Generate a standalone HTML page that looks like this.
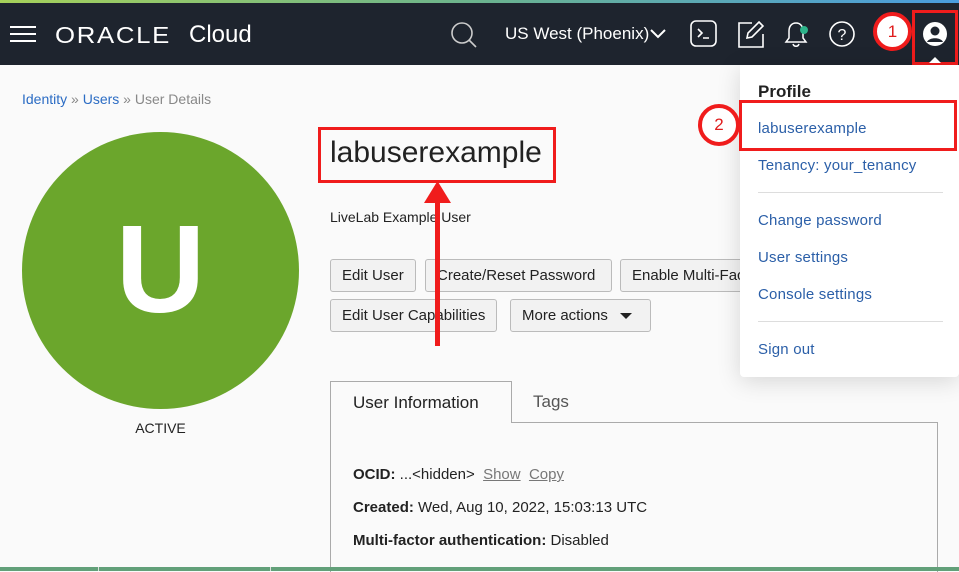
<!DOCTYPE html>
<html><head><meta charset="utf-8"><style>
*{margin:0;padding:0;box-sizing:border-box}
body{width:959px;height:571px;overflow:hidden;background:#fafafa;font-family:"Liberation Sans",sans-serif;position:relative;color:#222}
.a{position:absolute}
.btn{position:absolute;height:33px;border:1px solid #bbb;border-radius:3px;background:#f2f2f2;font-size:15px;line-height:31px;padding:0 11px;color:#222;white-space:nowrap}
.menu a{position:absolute;left:18px;color:#2b5fa8;font-size:15px;text-decoration:none;letter-spacing:.2px}
.red{border:3px solid #f01c1c}
.lbl{position:absolute;font-size:15px;color:#222}
</style></head><body>
<div class="a" style="left:0;top:0;width:959px;height:3px;background:linear-gradient(90deg,#a6d15a,#6bb38e 50%,#4a9de0)"></div>
<div class="a" style="left:0;top:3px;width:959px;height:62px;background:#1e242e"></div>
<div class="a" style="left:10px;top:26px;width:26px;height:2px;background:#fff"></div>
<div class="a" style="left:10px;top:33px;width:26px;height:2px;background:#fff"></div>
<div class="a" style="left:10px;top:40px;width:26px;height:2px;background:#fff"></div>
<div class="a" style="left:55px;top:22px;color:#fff;font-size:23px;letter-spacing:1.5px;transform:scaleX(1.12);transform-origin:left">ORACLE</div>
<div class="a" style="left:189px;top:21px;color:#fff;font-size:24px">Cloud</div>
<svg class="a" style="left:450px;top:21px" width="28" height="28"><circle cx="12" cy="12" r="10" fill="none" stroke="#ccc" stroke-width="1.6"/><line x1="19" y1="19" x2="26" y2="26" stroke="#ccc" stroke-width="1.6"/></svg>
<div class="a" style="left:505px;top:24px;color:#fff;font-size:17px">US West (Phoenix)</div>
<svg class="a" style="left:650px;top:28px" width="16" height="12"><path d="M1 2l7 7 7-7" fill="none" stroke="#fff" stroke-width="2"/></svg>
<svg class="a" style="left:690px;top:20px" width="28" height="28"><rect x="1" y="1" width="25" height="25" rx="5" fill="none" stroke="#fff" stroke-width="1.6"/><path d="M8 9l4 4-4 4M13 18h6" fill="none" stroke="#fff" stroke-width="1.6"/></svg>
<svg class="a" style="left:737px;top:20px" width="28" height="28"><path d="M15 3H2v24h24V14" fill="none" stroke="#fff" stroke-width="1.6"/><path d="M22 2l4 4-11 11-5 1 1-5z" fill="none" stroke="#fff" stroke-width="1.6"/></svg>
<svg class="a" style="left:783px;top:20px" width="28" height="30"><path d="M13 3c-5 0-7 4-7 8v7l-3 4h20l-3-4v-7c0-4-2-8-7-8zM10 24c1 3 5 3 6 0" fill="none" stroke="#fff" stroke-width="1.5"/><circle cx="21" cy="10" r="4" fill="#2db38a"/></svg>
<svg class="a" style="left:828px;top:20px" width="28" height="28"><circle cx="14" cy="14" r="12" fill="none" stroke="#fff" stroke-width="1.6"/><text x="14" y="20" font-size="16" fill="#fff" text-anchor="middle" font-family="Liberation Sans">?</text></svg>
<div class="a" style="left:873px;top:12px;width:39px;height:39px;border-radius:50%;background:#fff;border:4px solid #f01c1c;color:#e01c1c;font-size:17px;text-align:center;line-height:31px">1</div>
<div class="a red" style="left:912px;top:10px;width:46px;height:55px"></div>
<svg class="a" style="left:922px;top:21px" width="26" height="26"><circle cx="13" cy="13" r="12" fill="#fff"/><circle cx="13" cy="10" r="4.5" fill="#1e242e"/><path d="M5 21c2-5 14-5 16 0" fill="#1e242e"/></svg>
<div class="a" style="left:22px;top:91px;font-size:14px;color:#888"><span style="color:#2b6cc4">Identity</span> » <span style="color:#2b6cc4">Users</span> » User Details</div>
<div class="a" style="left:22px;top:132px;width:277px;height:277px;border-radius:50%;background:#6ba62c"></div>
<div class="a" style="left:22px;top:200px;width:277px;text-align:center;color:#fff;font-size:124px;font-weight:bold;line-height:140px">U</div>
<div class="a" style="left:22px;top:420px;width:277px;text-align:center;font-size:14px">ACTIVE</div>
<div class="a red" style="left:318px;top:127px;width:238px;height:56px"></div>
<div class="a" style="left:330px;top:136px;font-size:30px;color:#222">labuserexample</div>
<div class="a" style="left:330px;top:209px;font-size:14px">LiveLab Example User</div>
<div class="btn" style="left:330px;top:259px">Edit User</div>
<div class="btn" style="left:425px;top:259px;width:187px">Create/Reset Password</div>
<div class="btn" style="left:620px;top:259px;width:140px">Enable Multi-Factor</div>
<div class="btn" style="left:330px;top:299px">Edit User Capabilities</div>
<div class="btn" style="left:510px;top:299px;width:141px">More actions <svg width="12" height="8" style="margin-left:8px"><path d="M0 1h12L6 7z" fill="#222"/></svg></div>
<div class="a" style="left:435px;top:200px;width:5px;height:146px;background:#f01c1c"></div>
<svg class="a" style="left:424px;top:181px" width="27" height="22"><path d="M13.5 0L27 22H0z" fill="#f01c1c"/></svg>
<div class="a" style="left:330px;top:422px;width:608px;height:150px;border:1px solid #aaa;border-bottom:none"></div>
<div class="a" style="left:330px;top:381px;width:182px;height:42px;border:1px solid #aaa;border-bottom:none;background:#fafafa"></div>
<div class="a" style="left:353px;top:393px;font-size:17px">User Information</div>
<div class="a" style="left:533px;top:392px;font-size:17px;color:#555">Tags</div>
<div class="lbl" style="left:353px;top:466px"><b>OCID:</b> ...&lt;hidden&gt; &nbsp;<u style="color:#777">Show</u> &nbsp;<u style="color:#777">Copy</u></div>
<div class="lbl" style="left:353px;top:499px"><b>Created:</b> Wed, Aug 10, 2022, 15:03:13 UTC</div>
<div class="lbl" style="left:353px;top:532px"><b>Multi-factor authentication:</b> Disabled</div>
<div class="a" style="left:0;top:567px;width:959px;height:4px;background:#62a079"></div>
<div class="a" style="left:98px;top:567px;width:1px;height:4px;background:#ddd"></div>
<div class="a" style="left:270px;top:567px;width:1px;height:4px;background:#ddd"></div>
<div class="a menu" style="left:740px;top:65px;width:219px;height:312px;background:#fff;border-radius:0 0 4px 4px;box-shadow:0 4px 24px rgba(0,0,0,.15)">
<div class="a" style="left:18px;top:17px;font-size:17px;font-weight:bold;color:#222">Profile</div>
<a style="top:55px">labuserexample</a>
<a style="top:92px">Tenancy: your_tenancy</a>
<div class="a" style="left:18px;top:127px;width:185px;height:1px;background:#ddd"></div>
<a style="top:147px">Change password</a>
<a style="top:184px">User settings</a>
<a style="top:221px">Console settings</a>
<div class="a" style="left:18px;top:256px;width:185px;height:1px;background:#ddd"></div>
<a style="top:276px">Sign out</a>
</div>
<div class="a" style="left:929px;top:57px;width:0;height:0;border-left:6px solid transparent;border-right:6px solid transparent;border-bottom:6px solid #fff"></div>
<div class="a red" style="left:739px;top:100px;width:218px;height:51px"></div>
<div class="a" style="left:698px;top:104px;width:42px;height:42px;border-radius:50%;background:#fff;border:4px solid #f01c1c;color:#e01c1c;font-size:17px;text-align:center;line-height:34px">2</div>
</body></html>
